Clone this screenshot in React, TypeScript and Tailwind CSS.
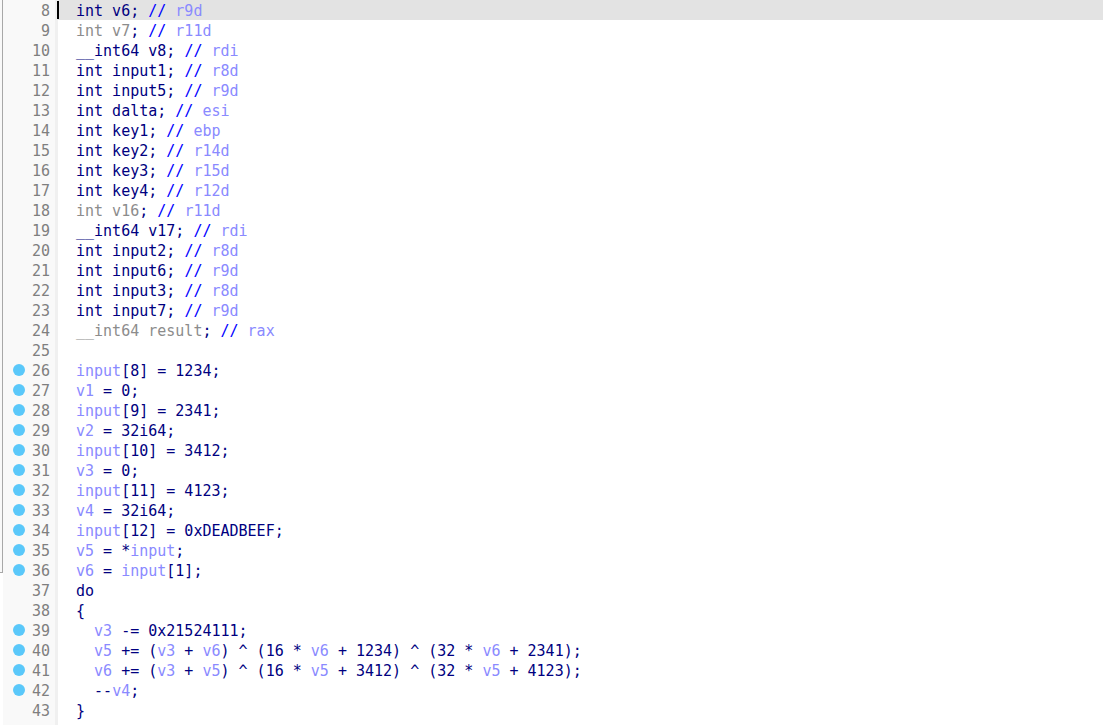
const lines: [number, string][] = [
  [8, "int v6; // r9d"],
  [9, "~int v7~; // r11d"],
  [10, "__int64 v8; // rdi"],
  [11, "int input1; // r8d"],
  [12, "int input5; // r9d"],
  [13, "int dalta; // esi"],
  [14, "int key1; // ebp"],
  [15, "int key2; // r14d"],
  [16, "int key3; // r15d"],
  [17, "int key4; // r12d"],
  [18, "~int v16~; // r11d"],
  [19, "__int64 v17; // rdi"],
  [20, "int input2; // r8d"],
  [21, "int input6; // r9d"],
  [22, "int input3; // r8d"],
  [23, "int input7; // r9d"],
  [24, "~__int64 result~; // rax"],
  [25, ""],
  [26, "$input$[8] = 1234;"],
  [27, "$v1$ = 0;"],
  [28, "$input$[9] = 2341;"],
  [29, "$v2$ = 32i64;"],
  [30, "$input$[10] = 3412;"],
  [31, "$v3$ = 0;"],
  [32, "$input$[11] = 4123;"],
  [33, "$v4$ = 32i64;"],
  [34, "$input$[12] = 0xDEADBEEF;"],
  [35, "$v5$ = *$input$;"],
  [36, "$v6$ = $input$[1];"],
  [37, "do"],
  [38, "{"],
  [39, "  $v3$ -= 0x21524111;"],
  [40, "  $v5$ += ($v3$ + $v6$) ^ (16 * $v6$ + 1234) ^ (32 * $v6$ + 2341);"],
  [41, "  $v6$ += ($v3$ + $v5$) ^ (16 * $v5$ + 3412) ^ (32 * $v5$ + 4123);"],
  [42, "  --$v4$;"],
  [43, "}"],
];

const breakpoints = [26, 27, 28, 29, 30, 31, 32, 33, 34, 35, 36, 39, 40, 41, 42];

type Tok = { text: string; cls: string };

// tiny markup: $var$ = local var, ~text~ = dimmed, "// reg" = comment
function tokenize(src: string): Tok[] {
  const out: Tok[] = [];
  let code = src;
  let reg = "";
  const ci = src.indexOf("// ");
  if (ci >= 0) {
    code = src.slice(0, ci);
    reg = src.slice(ci + 3);
  }
  const re = /(\$[^$]+\$|~[^~]+~)/g;
  let last = 0;
  let m: RegExpExecArray | null;
  while ((m = re.exec(code))) {
    if (m.index > last) out.push({ text: code.slice(last, m.index), cls: "text-[#000080]" });
    const t = m[0];
    out.push({
      text: t.slice(1, -1),
      cls: t[0] === "$" ? "text-[#8a8aff]" : "text-[#8c8c8c]",
    });
    last = m.index + t.length;
  }
  if (last < code.length) out.push({ text: code.slice(last), cls: "text-[#000080]" });
  if (ci >= 0) {
    out.push({ text: "// ", cls: "text-[#0000ff]" });
    out.push({ text: reg, cls: "text-[#8a8aff]" });
  }
  return out;
}

export default function App() {
  return (
    <div
      className="w-[1103px] h-[725px] overflow-hidden bg-white flex text-[15px] leading-[20px]"
      style={{ fontFamily: '"DejaVu Sans Mono", "Liberation Mono", monospace' }}
    >
      {/* frame edge */}
      <div className="w-[3px] h-[573px] shrink-0 border-r border-b border-[#a8a8a8] bg-[#f9f9f9]" />

      {/* gutter */}
      <div className="w-[52px] shrink-0 bg-[#f9f9f9] flex flex-col">
        {lines.map(([n]) => (
          <div key={n} className="h-[20px] flex items-center justify-between pl-[10px] pr-[5px]">
            {breakpoints.includes(n) ? (
              <span className="w-[12px] h-[12px] rounded-full bg-[#5ac8fa]" />
            ) : (
              <span />
            )}
            <span className="text-[#7f7f7f] pt-[2px]">{n}</span>
          </div>
        ))}
      </div>
      <div className="w-[3px] shrink-0 bg-[#f0f0f0]" />

      {/* code */}
      <div className="flex-1 flex flex-col">
        {lines.map(([n, src]) => (
          <div
            key={n}
            className={
              n === 8
                ? "relative h-[20px] pl-[18px] pt-[1px] whitespace-pre bg-[#e3e3e3]"
                : "relative h-[20px] pl-[18px] pt-[1px] whitespace-pre"
            }
          >
            {n === 8 && <span className="absolute left-[-1px] top-[1px] w-[2px] h-[18px] bg-black" />}
            {tokenize(src).map((t, i) => (
              <span key={i} className={t.cls}>
                {t.text}
              </span>
            ))}
          </div>
        ))}
      </div>
    </div>
  );
}
